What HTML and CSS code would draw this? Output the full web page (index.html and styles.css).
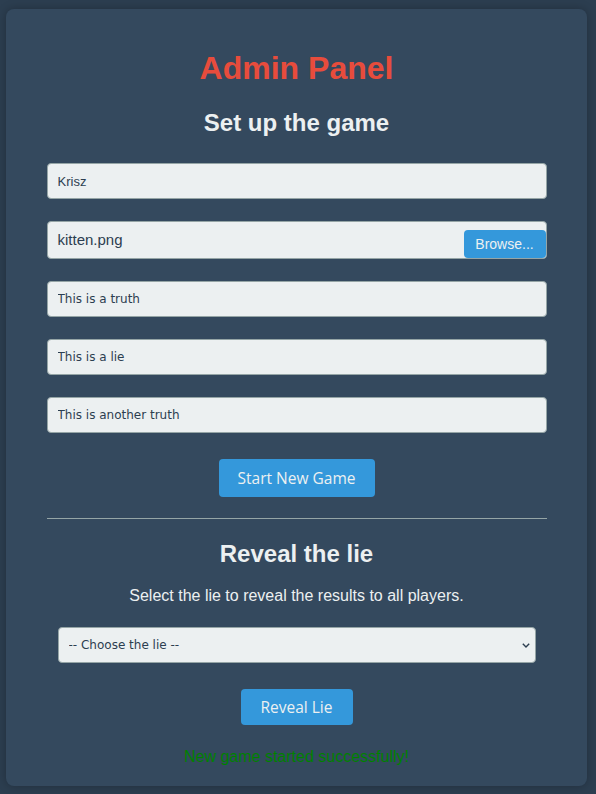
FILE: index.html
```html
<!DOCTYPE html>
<html lang="en">
<head>
<meta charset="utf-8">
<title>Admin Panel</title>
<link rel="stylesheet" href="styles.css">
</head>
<body>
<div class="panel">
  <h1 class="title">Admin Panel</h1>
  <h2 class="subtitle setup">Set up the game</h2>
  <form class="setup-form">
    <input class="field field-name" type="text" value="Krisz">
    <div class="field file-field">
      <span class="file-name">kitten.png</span>
      <span class="browse">Browse...</span>
    </div>
    <input class="field" type="text" value="This is a truth">
    <input class="field" type="text" value="This is a lie">
    <input class="field" type="text" value="This is another truth">
    <button type="button" class="btn start-btn">Start New Game</button>
  </form>
  <hr class="divider">
  <h2 class="subtitle reveal">Reveal the lie</h2>
  <p class="hint">Select the lie to reveal the results to all players.</p>
  <div class="select-wrap">
    <select class="lie-select">
      <option>-- Choose the lie --</option>
    </select>
    <svg class="chevron" width="8" height="5" viewBox="0 0 8 5"><path d="M0.8 0.8 L4 4 L7.2 0.8" fill="none" stroke="#2c3e50" stroke-width="1.4"/></svg>
  </div>
  <button type="button" class="btn reveal-btn">Reveal Lie</button>
  <p class="message">New game started successfully!</p>
</div>
</body>
</html>
```
FILE: styles.css
```css
html, body {
  margin: 0;
  padding: 0;
}
body {
  background: #2c3e50;
  font-family: "Liberation Sans", Arial, sans-serif;
  color: #ecf0f1;
  padding: 9px 9px 8px 6px;
}
.panel {
  background: #34495e;
  border-radius: 8px;
  box-shadow: 0 0 10px rgba(0, 0, 0, 0.25);
  padding: 20px 40px;
  height: 777px;
  box-sizing: border-box;
  display: flex;
  flex-direction: column;
  align-items: center;
}
.title {
  color: #e74c3c;
  font-size: 32px;
  line-height: 37px;
  font-weight: bold;
  margin: 21px 0 21px;
}
.subtitle {
  color: #ecf0f1;
  font-size: 24px;
  line-height: 28px;
  font-weight: bold;
  margin: 0;
}
.setup {
  margin-top: 1px;
  margin-bottom: 26px;
}
.setup-form {
  width: 500px;
  display: flex;
  flex-direction: column;
  align-items: center;
  gap: 22px;
  margin: 0;
}
.field {
  width: 100%;
  box-sizing: border-box;
  height: 36px;
  margin: 0;
  padding: 0 10px;
  background: #ecf0f1;
  border: 1px solid #95a5a6;
  border-radius: 4px;
  color: #2c3e50;
  font-family: "DejaVu Sans", Verdana, sans-serif;
  font-size: 12px;
  outline: none;
}
.field-name {
  font-family: "Liberation Sans", Arial, sans-serif;
  font-size: 13px;
}
.file-field {
  height: 38px;
  display: flex;
  justify-content: space-between;
  align-items: flex-end;
  padding: 0 0 0 10px;
}
.file-name {
  font-family: "Liberation Sans", Arial, sans-serif;
  font-size: 15px;
  color: #2c3e50;
  align-self: center;
  margin-top: -2px;
}
.browse {
  background: #3498db;
  color: #ecf0f1;
  font-family: "Liberation Sans", Arial, sans-serif;
  font-size: 14px;
  height: 28px;
  line-height: 28px;
  width: 82px;
  text-align: center;
  border-radius: 4px;
}
.btn {
  background: #3498db;
  color: #ecf0f1;
  border: none;
  border-radius: 4px;
  font-family: "Open Sans", sans-serif;
  font-size: 15.5px;
  height: 38px;
  padding: 0 20px;
  cursor: pointer;
}
.start-btn {
  margin-top: 4px;
  width: 156px;
  padding: 0;
}
.divider {
  width: 500px;
  border: none;
  border-top: 1px solid #95a5a6;
  margin: 21px 0 21px;
  height: 0;
}
.hint {
  font-size: 16px;
  line-height: 18px;
  margin: 19px 0 22px;
  color: #ecf0f1;
}
.select-wrap {
  position: relative;
  width: 478px;
  height: 36px;
}
.lie-select {
  width: 100%;
  height: 36px;
  box-sizing: border-box;
  appearance: none;
  -webkit-appearance: none;
  background: #ecf0f1;
  border: 1px solid #95a5a6;
  border-radius: 4px;
  color: #2c3e50;
  font-family: "DejaVu Sans", Verdana, sans-serif;
  font-size: 12px;
  padding: 0 10px;
  margin: 0;
  outline: none;
}
.chevron {
  position: absolute;
  right: 6px;
  top: 16px;
}
.reveal-btn {
  margin-top: 26px;
  width: 112px;
  padding: 0;
}
.message {
  color: #008000;
  font-size: 16px;
  line-height: 18px;
  margin: 23px 0 0;
}
```
